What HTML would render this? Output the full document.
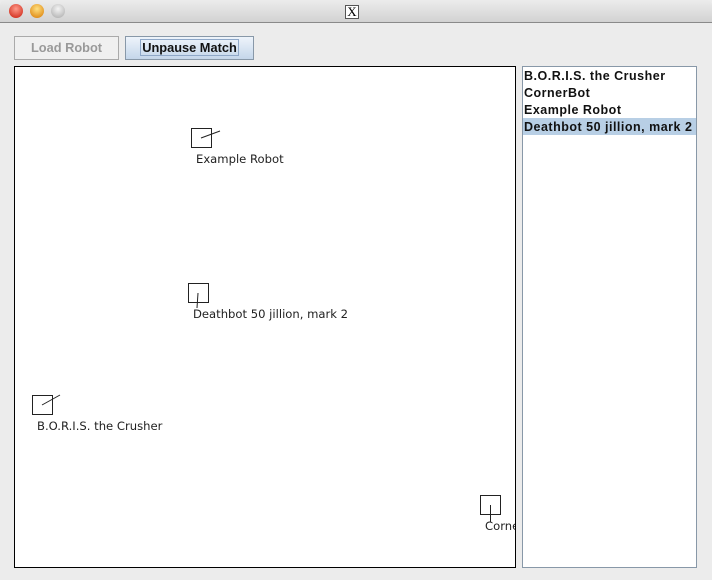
<!DOCTYPE html>
<html><head><style>
*{margin:0;padding:0;box-sizing:border-box}
body{width:712px;height:580px;background:#ececec;font-family:"Liberation Sans","DejaVu Sans",sans-serif;position:relative;overflow:hidden}
.title{position:absolute;left:0;top:0;width:712px;height:23px;background:linear-gradient(#ececec,#d2d2d2);border-bottom:1px solid #8a8a8a;border-radius:5px 5px 0 0}
.dot{position:absolute;top:4px;width:14px;height:14px;border-radius:50%}
.btn{position:absolute;top:36px;height:24px;font-size:12.8px;font-weight:bold;text-align:center;line-height:22px}
.list{position:absolute;left:522px;top:66px;width:175px;height:502px;background:#fff;border:1px solid #8898a8}
.row{height:17px;line-height:18px;font-size:12.5px;font-weight:bold;padding-left:1px;color:#111;white-space:nowrap;letter-spacing:0.5px}
</style></head><body>
<div class="title">
<div class="dot" style="left:9px;background:radial-gradient(circle at 50% 35%,#ff9a8a,#c81a0a)"></div>
<div class="dot" style="left:30px;background:radial-gradient(circle at 50% 35%,#ffe080,#d87800)"></div>
<div class="dot" style="left:51px;background:radial-gradient(circle at 50% 35%,#f4f4f4,#a8a8a8)"></div>
<div style="position:absolute;left:345px;top:5px;width:14px;height:14px;border:1px solid #555;background:#fff;font:13px 'Liberation Serif',serif;line-height:12px;text-align:center">X</div>
</div>
<div class="btn" style="left:14px;width:105px;border:1px solid #aaa;background:#f0f0f0;color:#999">Load Robot</div>
<div class="btn" style="left:125px;width:129px;border:1px solid #8898a8;background:linear-gradient(#eef4fb,#c4d6ea);color:#111"><span style="border:1px solid #8fa8c8;padding:0 1px">Unpause Match</span></div>
<svg style="position:absolute;left:0;top:0" width="712" height="580">
<rect x="14.5" y="66.5" width="501" height="501" fill="#fff" stroke="#000"/>
<defs><clipPath id="c"><rect x="15" y="67" width="500" height="500"/></clipPath></defs>
<g clip-path="url(#c)" stroke="#222" fill="none" stroke-width="1">
<rect x="191.5" y="128.5" width="20" height="19"/><line x1="201" y1="138" x2="220" y2="131"/>
<rect x="188.5" y="283.5" width="20" height="19"/><line x1="198" y1="293" x2="197" y2="308"/>
<rect x="32.5" y="395.5" width="20" height="19"/><line x1="42" y1="405" x2="60" y2="395"/>
<rect x="480.5" y="495.5" width="20" height="19"/><line x1="490.5" y1="505" x2="490.5" y2="522"/>
<g fill="#222" stroke="none" font-size="11.6" font-family="DejaVu Sans,sans-serif">
<text x="196" y="163">Example Robot</text>
<text x="193" y="318">Deathbot 50 jillion, mark 2</text>
<text x="37" y="430">B.O.R.I.S. the Crusher</text>
<text x="485" y="530">CornerBot</text>
</g></g></svg>
<div class="list">
<div class="row">B.O.R.I.S. the Crusher</div>
<div class="row">CornerBot</div>
<div class="row">Example Robot</div>
<div class="row" style="background:#b8cfe5">Deathbot 50 jillion, mark 2</div>
</div>
</body></html>
